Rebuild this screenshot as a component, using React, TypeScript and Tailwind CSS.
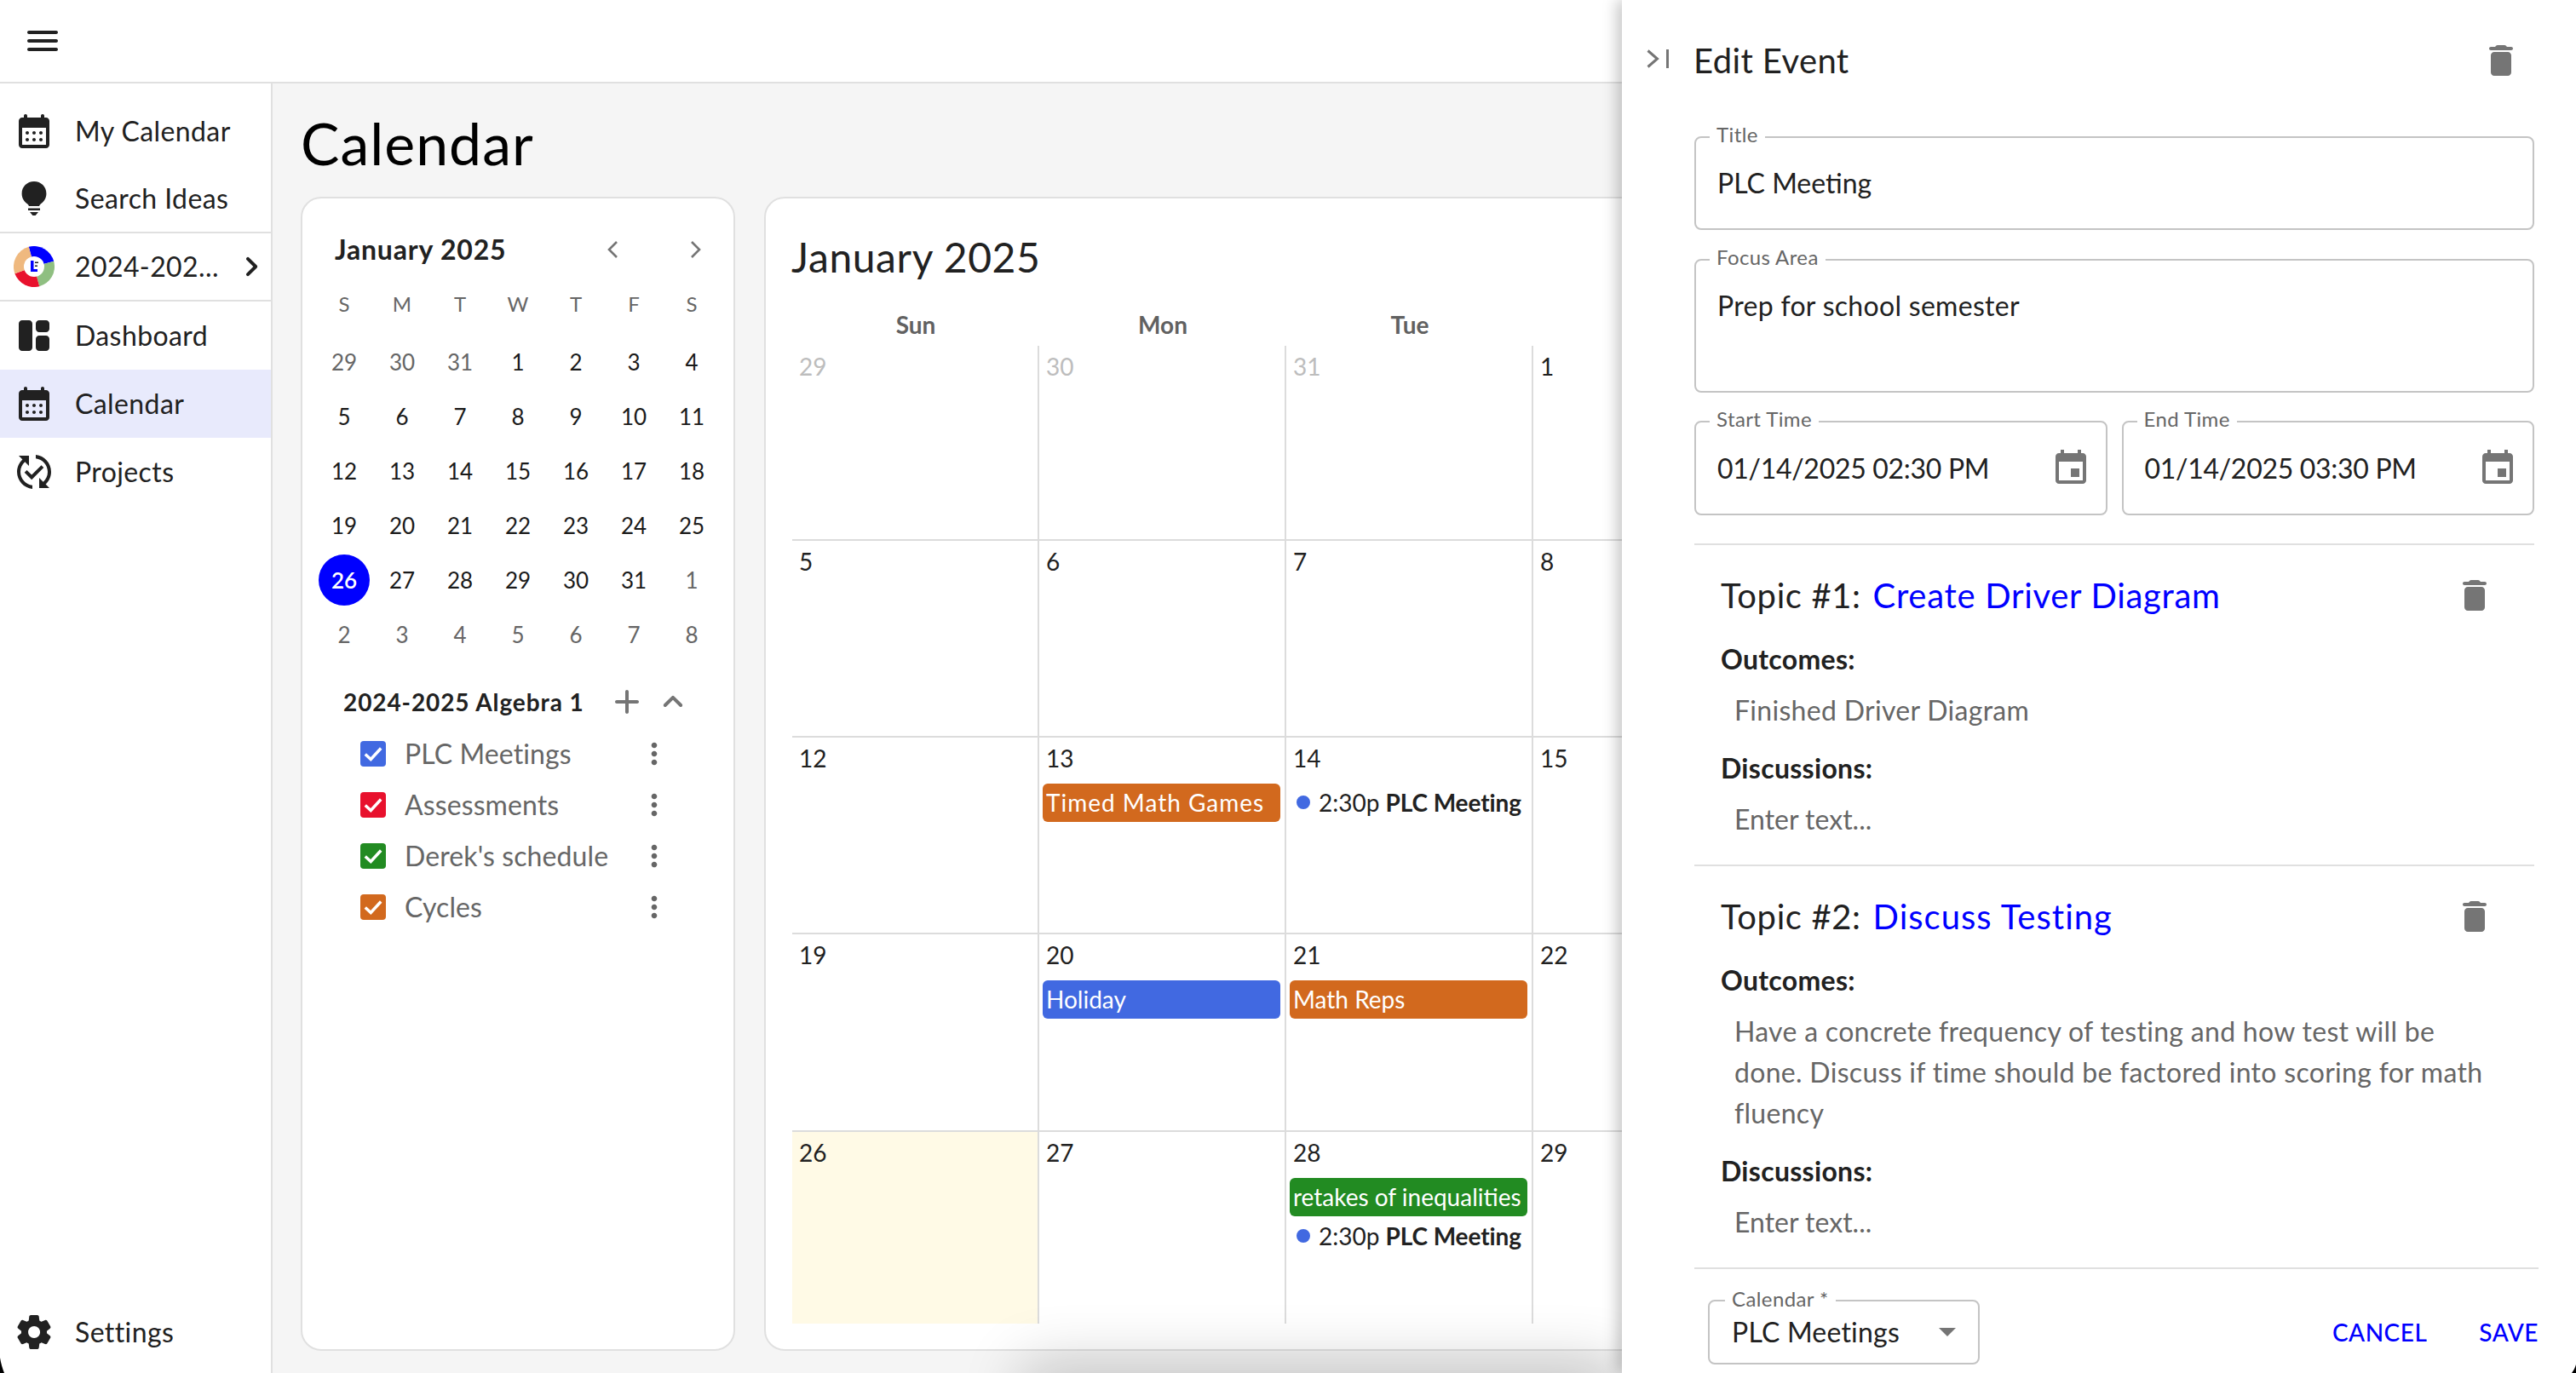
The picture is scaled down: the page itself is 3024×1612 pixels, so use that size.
import type { ReactNode } from "react";

const paths = {
  menu: "M4 18h16c.55 0 1-.45 1-1s-.45-1-1-1H4c-.55 0-1 .45-1 1s.45 1 1 1zm0-5h16c.55 0 1-.45 1-1s-.45-1-1-1H4c-.55 0-1 .45-1 1s.45 1 1 1zM3 7c0 .55.45 1 1 1h16c.55 0 1-.45 1-1s-.45-1-1-1H4c-.55 0-1 .45-1 1z",
  calendar: "M17 2c-.55 0-1 .45-1 1v1H8V3c0-.55-.45-1-1-1s-1 .45-1 1v1H5c-1.11 0-1.99.9-1.99 2L3 20c0 1.1.89 2 2 2h14c1.1 0 2-.9 2-2V6c0-1.1-.9-2-2-2h-1V3c0-.55-.45-1-1-1zm2 18H5V10h14v10zm-8-7c0-.55.45-1 1-1s1 .45 1 1-.45 1-1 1-1-.45-1-1zm-4 0c0-.55.45-1 1-1s1 .45 1 1-.45 1-1 1-1-.45-1-1zm8 0c0-.55.45-1 1-1s1 .45 1 1-.45 1-1 1-1-.45-1-1zm-4 4c0-.55.45-1 1-1s1 .45 1 1-.45 1-1 1-1-.45-1-1zm-4 0c0-.55.45-1 1-1s1 .45 1 1-.45 1-1 1-1-.45-1-1zm8 0c0-.55.45-1 1-1s1 .45 1 1-.45 1-1 1-1-.45-1-1z",
  bulb: "M12 2C7.9 2 4.8 5.1 4.8 9.1c0 2.6 1.3 4.7 3.2 6 .5.4.8.9 1 1.4h6c.2-.5.5-1 1-1.4 1.9-1.3 3.2-3.4 3.2-6C19.2 5.1 16.1 2 12 2zM8.5 17.8h7V19h-7zM9.5 20h5l-1.7 2h-1.6z",
  dashboard: "M9 21H5c-1.1 0-2-.9-2-2V5c0-1.1.9-2 2-2h4c1.1 0 2 .9 2 2v14c0 1.1-.9 2-2 2zm6 0h4c1.1 0 2-.9 2-2v-5c0-1.1-.9-2-2-2h-4c-1.1 0-2 .9-2 2v5c0 1.1.9 2 2 2zm6-13V5c0-1.1-.9-2-2-2h-4c-1.1 0-2 .9-2 2v3c0 1.1.9 2 2 2h4c1.1 0 2-.9 2-2z",
  projects: "M17.66 9.53l-7.07 7.07-4.24-4.24 1.41-1.41 2.83 2.83 5.66-5.66 1.41 1.41zM4 12c0-2.33 1.02-4.42 2.62-5.88L9 8.5v-6H3l2.2 2.2C3.24 6.52 2 9.11 2 12c0 5.19 3.95 9.45 9 9.95v-2.02c-3.94-.49-7-3.86-7-7.93zm18 0c0-5.19-3.95-9.45-9-9.95v2.02c3.94.49 7 3.86 7 7.93 0 2.33-1.02 4.42-2.62 5.88L15 15.5v6h6l-2.2-2.2c1.96-1.82 3.2-4.41 3.2-7.3z",
  settings: "M19.5 12c0-.23-.01-.45-.03-.68l1.86-1.41c.4-.3.51-.86.26-1.3l-1.87-3.23c-.25-.44-.79-.62-1.25-.42l-2.15.91c-.37-.26-.76-.49-1.17-.68l-.29-2.31c-.06-.5-.49-.88-.99-.88h-3.73c-.51 0-.94.38-1 .88l-.29 2.31c-.41.19-.8.42-1.17.68l-2.15-.91c-.46-.2-1-.02-1.25.42L2.41 8.62c-.25.44-.14.99.26 1.3l1.86 1.41c-.02.22-.03.44-.03.67s.01.45.03.68l-1.86 1.41c-.4.3-.51.86-.26 1.3l1.87 3.23c.25.44.79.62 1.25.42l2.15-.91c.37.26.76.49 1.17.68l.29 2.31c.06.5.49.88.99.88h3.73c.5 0 .93-.38.99-.88l.29-2.31c.41-.19.8-.42 1.17-.68l2.15.91c.46.2 1 .02 1.25-.42l1.87-3.23c.25-.44.14-.99-.26-1.3l-1.86-1.41c.03-.23.04-.45.04-.68zm-7.46 3.5c-1.93 0-3.5-1.57-3.5-3.5s1.57-3.5 3.5-3.5 3.5 1.57 3.5 3.5-1.57 3.5-3.5 3.5z",
  trash: "M6 19c0 1.1.9 2 2 2h8c1.1 0 2-.9 2-2V9c0-1.1-.9-2-2-2H8c-1.1 0-2 .9-2 2v10zM18 4h-2.5l-.71-.71c-.18-.18-.44-.29-.7-.29H9.91c-.26 0-.52.11-.7.29L8.5 4H6c-.55 0-1 .45-1 1s.45 1 1 1h12c.55 0 1-.45 1-1s-.45-1-1-1z",
  event: "M17 12h-5v5h5v-5zM16 1v2H8V1H6v2H5c-1.11 0-1.99.9-1.99 2L3 19c0 1.1.89 2 2 2h14c1.1 0 2-.9 2-2V5c0-1.1-.9-2-2-2h-1V1h-2zm3 18H5V8h14v11z",
  more: "M12 8c1.1 0 2-.9 2-2s-.9-2-2-2-2 .9-2 2 .9 2 2 2zm0 2c-1.1 0-2 .9-2 2s.9 2 2 2 2-.9 2-2-.9-2-2-2zm0 6c-1.1 0-2 .9-2 2s.9 2 2 2 2-.9 2-2-.9-2-2-2z",
  plus: "M18 13h-5v5c0 .55-.45 1-1 1s-1-.45-1-1v-5H6c-.55 0-1-.45-1-1s.45-1 1-1h5V6c0-.55.45-1 1-1s1 .45 1 1v5h5c.55 0 1 .45 1 1s-.45 1-1 1z",
  chevronUp: "M11.29 8.71 6.7 13.3c-.39.39-.39 1.02 0 1.41.39.39 1.02.39 1.41 0L12 10.83l3.88 3.88c.39.39 1.02.39 1.41 0 .39-.39.39-1.02 0-1.41L12.7 8.71c-.38-.39-1.02-.39-1.41 0z",
  chevronRight: "M9.29 6.71c-.39.39-.39 1.02 0 1.41L13.17 12l-3.88 3.88c-.39.39-.39 1.02 0 1.41.39.39 1.02.39 1.41 0l4.59-4.59c.39-.39.39-1.02 0-1.41L10.7 6.7c-.38-.38-1.02-.38-1.41.01z",
};

function Icon({ d, className }: { d: string; className: string }) {
  return (
    <svg viewBox="0 0 24 24" fill="currentColor" className={className}>
      <path d={d} />
    </svg>
  );
}

function Logo() {
  return (
    <svg viewBox="0 0 48 48" className="h-[48px] w-[48px] shrink-0">
      <path d="M24 24 17.8.8A24 24 0 0 1 47.2 17.8Z" fill="#0000ff" />
      <path d="M24 24 47.2 17.8A24 24 0 0 1 30.2 47.2Z" fill="#8fbf81" />
      <path d="M24 24 30.2 47.2A24 24 0 0 1 1.4 32.2Z" fill="#e8112d" />
      <path d="M24 24 1.4 32.2A24 24 0 0 1 17.8.8Z" fill="#efb97f" />
      <circle cx="24" cy="24" r="12" fill="#fff" />
      <rect x="20" y="17" width="3.5" height="13" fill="#0000ff" />
      <rect x="20" y="27" width="8" height="3" fill="#0000ff" />
      <rect x="25" y="18.5" width="4" height="1.5" fill="#222" />
      <rect x="25" y="22.5" width="3" height="1.5" fill="#222" />
    </svg>
  );
}

function NavItem({ icon, label, active, height = "h-[80px]" }: { icon: ReactNode; label: string; active?: boolean; height?: string }) {
  return (
    <div className={`flex items-center pl-[16px] ${height} ${active ? "bg-[#e8eafc]" : ""}`}>
      <span className="flex w-[48px] shrink-0 justify-center text-[#212121]">{icon}</span>
      <span className="ml-[24px] text-[32px] tracking-[0.4px] text-[#212121]">{label}</span>
    </div>
  );
}

function Sidebar() {
  return (
    <aside className="flex w-[320px] shrink-0 flex-col border-r-2 border-[#e0e0e0] bg-white pt-[16px]">
      <NavItem height="h-[79px]" icon={<Icon d={paths.calendar} className="h-[48px] w-[48px]" />} label="My Calendar" />
      <NavItem height="h-[79px]" icon={<Icon d={paths.bulb} className="h-[48px] w-[48px]" />} label="Search Ideas" />
      <div className="flex h-[82px] items-center border-y-2 border-[#e0e0e0] pl-[16px]">
        <Logo />
        <span className="ml-[24px] whitespace-nowrap text-[32px] tracking-[0.4px] text-[#212121]">2024-202...</span>
        <Icon d={paths.chevronRight} className="ml-auto mr-[-1px] h-[48px] w-[48px] shrink-0 text-[#212121]" />
      </div>
      <NavItem icon={<Icon d={paths.dashboard} className="h-[48px] w-[48px]" />} label="Dashboard" />
      <NavItem icon={<Icon d={paths.calendar} className="h-[48px] w-[48px]" />} label="Calendar" active />
      <NavItem icon={<Icon d={paths.projects} className="h-[48px] w-[48px]" />} label="Projects" />
      <div className="mt-auto mb-[8px]">
        <NavItem icon={<Icon d={paths.settings} className="h-[48px] w-[48px]" />} label="Settings" />
      </div>
    </aside>
  );
}

const miniWeeks = [
  [29, 30, 31, 1, 2, 3, 4],
  [5, 6, 7, 8, 9, 10, 11],
  [12, 13, 14, 15, 16, 17, 18],
  [19, 20, 21, 22, 23, 24, 25],
  [26, 27, 28, 29, 30, 31, 1],
  [2, 3, 4, 5, 6, 7, 8],
];

const calendars = [
  { name: "PLC Meetings", color: "bg-[#4169e1]" },
  { name: "Assessments", color: "bg-[#e8112d]" },
  { name: "Derek's schedule", color: "bg-[#228b22]" },
  { name: "Cycles", color: "bg-[#d2691e]" },
];

function MiniCalendar() {
  return (
    <div className="w-[510px] shrink-0 rounded-[24px] border-2 border-[#e0e0e0] bg-white pl-[15px] pt-[28px]">
      <div className="flex h-[64px] items-center pl-[23px]">
        <span className="text-[32px] font-bold tracking-[0.8px] text-[#212121]">January 2025</span>
        <svg viewBox="0 0 16 24" fill="none" stroke="#757575" strokeWidth="2.6" className="ml-auto h-[24px] w-[16px]">
          <path d="M13 3 4 12l9 9" />
        </svg>
        <svg viewBox="0 0 16 24" fill="none" stroke="#757575" strokeWidth="2.6" className="ml-[82px] mr-[36px] h-[24px] w-[16px]">
          <path d="m3 3 9 9-9 9" />
        </svg>
      </div>
      <div className="grid w-[476px] grid-cols-7 text-center text-[26px]">
        {["S", "M", "T", "W", "T", "F", "S"].map((d, i) => (
          <div key={i} className="flex h-[68px] items-center justify-center pb-[4px] text-[24px] text-[#666666]">{d}</div>
        ))}
        {miniWeeks.map((week, w) =>
          week.map((d, i) => {
            const outside = (w === 0 && d > 20) || (w >= 4 && d < 20);
            const today = w === 4 && d === 26;
            return (
              <div key={`${w}-${i}`} className="flex h-[64px] items-center justify-center">
                {today ? (
                  <span className="flex h-[60px] w-[60px] items-center justify-center rounded-full bg-[#0000ff] font-semibold text-white">{d}</span>
                ) : (
                  <span className={outside ? "text-[#666666]" : "text-[#1a1a1a]"}>{d}</span>
                )}
              </div>
            );
          }),
        )}
      </div>
      <div className="mr-[47px] mt-[16px] flex h-[62px] items-center gap-[6px] pl-[33px]">
        <span className="mr-auto whitespace-nowrap text-[28px] font-bold tracking-[0.9px] text-[#212121]">2024-2025 Algebra 1</span>
        <Icon d={paths.plus} className="h-[48px] w-[48px] shrink-0 text-[#757575]" />
        <Icon d={paths.chevronUp} className="h-[48px] w-[48px] shrink-0 text-[#757575]" />
      </div>
      <div className="pl-[53px]">
        {calendars.map((c) => (
          <div key={c.name} className="flex h-[60px] items-center">
            <span className={`flex h-[30px] w-[30px] items-center justify-center rounded-[4px] ${c.color}`}>
              <svg viewBox="0 0 24 24" fill="none" stroke="#fff" strokeWidth="3.2" className="h-[26px] w-[26px]">
                <path d="M3.5 12.5 9.5 18 20.5 6" />
              </svg>
            </span>
            <span className="ml-[22px] w-[273px] whitespace-nowrap text-[32px] tracking-[0.1px] text-[#666666]">{c.name}</span>
            <Icon d={paths.more} className="h-[40px] w-[40px] text-[#666666]" />
          </div>
        ))}
      </div>
    </div>
  );
}

type CalEvent = { kind: "bar"; title: string; color: string } | { kind: "dot"; title: string };

const events: Record<string, CalEvent[]> = {
  "13": [{ kind: "bar", title: "Timed Math Games", color: "bg-[#d2691e] tracking-[1px]" }],
  "14": [{ kind: "dot", title: "PLC Meeting" }],
  "20": [{ kind: "bar", title: "Holiday", color: "bg-[#4169e1]" }],
  "21": [{ kind: "bar", title: "Math Reps", color: "bg-[#d2691e]" }],
  "28": [
    { kind: "bar", title: "retakes of inequalities", color: "bg-[#228b22]" },
    { kind: "dot", title: "PLC Meeting" },
  ],
};

// only the columns that stay visible beside the drawer
const monthWeeks = [
  [29, 30, 31, 1],
  [5, 6, 7, 8],
  [12, 13, 14, 15],
  [19, 20, 21, 22],
  [26, 27, 28, 29],
];

function MonthGrid() {
  return (
    <div className="min-w-0 flex-1 overflow-hidden rounded-[24px] border-2 border-[#e0e0e0] bg-white pl-[31px] pt-[37px]">
      <div className="ml-[-1px] h-[64px] text-[48px] leading-[64px] tracking-[0.6px] text-[#212121]">January 2025</div>
      <div className="mt-[24px] grid w-[1160px] grid-cols-4">
        {["Sun", "Mon", "Tue", ""].map((d) => (
          <div key={d} className="flex h-[48px] items-center justify-center pb-[2px] text-[28px] font-bold text-[#616161]">{d}</div>
        ))}
      </div>
      <div className="grid h-[1148px] w-[1160px] grid-cols-4 grid-rows-[227px_231px_231px_232px_227px]">
        {monthWeeks.map((week, w) =>
          week.map((d, i) => {
            const outside = w === 0 && d > 20;
            const today = w === 4 && d === 26;
            return (
              <div key={`${w}-${i}`} className={`border-r-2 border-[#dcdcdc] ${w > 0 ? "border-t-2" : ""} ${today ? "bg-[#fffae6]" : ""}`}>
                <div className={`pl-[8px] pt-[6px] text-[28px] leading-[36px] ${outside ? "text-[#bdbdbd]" : "text-[#212121]"}`}>{d}</div>
                <div className="mt-[12px] flex flex-col gap-[1px] pl-[4px] pr-[5px]">
                  {!outside &&
                    (events[String(d)] ?? []).map((e) =>
                      e.kind === "bar" ? (
                        <div key={e.title} className={`flex h-[45px] items-center whitespace-nowrap rounded-[6px] pb-[2px] pl-[4px] text-[28px] text-white ${e.color}`}>{e.title}</div>
                      ) : (
                        <div key={e.title} className="flex h-[45px] items-center whitespace-nowrap pb-[2px] text-[28px] text-[#212121]">
                          <span className="ml-[8px] mr-[10px] h-[16px] w-[16px] shrink-0 rounded-full bg-[#4169e1]" />
                          2:30p&nbsp;<b className="font-bold tracking-[-0.1px]">{e.title}</b>
                        </div>
                      ),
                    )}
                </div>
              </div>
            );
          }),
        )}
      </div>
    </div>
  );
}

function Field({ label, height, children, className }: { label: string; height: string; children: ReactNode; className?: string }) {
  return (
    <div className={`relative rounded-[8px] border-2 border-[#c4c4c4] ${height} ${className ?? ""}`}>
      <span className="absolute left-[16px] top-[-20px] bg-white px-[8px] text-[24px] leading-[32px] tracking-[0.4px] text-[#666666]">{label}</span>
      {children}
    </div>
  );
}

function Topic({ n, title, spacing, outcome }: { n: number; title: string; spacing: string; outcome: ReactNode }) {
  return (
    <div className="border-t-2 border-[#e0e0e0] pb-[29px] pl-[31px] pt-[35px]">
      <div className="flex h-[48px] items-center pr-[46px] text-[40px]">
        <span className="tracking-[0.6px] text-[#212121]">Topic #{n}:</span>
        <span className={`ml-[14px] text-[#0000ff] ${spacing}`}>{title}</span>
        <Icon d={paths.trash} className="ml-auto h-[48px] w-[48px] text-[#757575]" />
      </div>
      <div className="mt-[27px] text-[32px] font-bold leading-[48px] tracking-[0.3px] text-[#212121]">Outcomes:</div>
      <div className="mt-[12px] pl-[16px] text-[32px] leading-[48px] tracking-[0.3px] text-[#666666]">{outcome}</div>
      <div className="mt-[20px] text-[32px] font-bold leading-[48px] tracking-[0.3px] text-[#212121]">Discussions:</div>
      <div className="mt-[12px] pl-[16px] text-[32px] leading-[48px] text-[#666666]">Enter text...</div>
    </div>
  );
}

function EditDrawer() {
  return (
    <div className="absolute bottom-0 right-0 top-0 w-[1120px] bg-white shadow-[-6px_0_16px_rgba(0,0,0,0.22)]">
      <div className="mt-[47px] flex h-[48px] items-center pl-[18px] pr-[64px]">
        <span className="flex w-[48px] justify-center pb-[4px]">
          <svg viewBox="0 0 26 22" fill="none" stroke="#757575" strokeWidth="3" className="h-[22px] w-[26px]">
            <path d="m1.5 1.5 11 9.5-11 9.5M24.5 0v22" />
          </svg>
        </span>
        <span className="ml-[18px] text-[40px] tracking-[0.4px] text-[#212121]">Edit Event</span>
        <Icon d={paths.trash} className="ml-auto h-[48px] w-[48px] text-[#757575]" />
      </div>
      <div className="mt-[65px] flex flex-col pl-[85px] pr-[49px]">
        <Field label="Title" height="h-[110px]">
          <div className="flex h-full items-center pl-[25px] text-[32px] text-[#212121]">PLC Meeting</div>
        </Field>
        <Field label="Focus Area" height="h-[157px]" className="mt-[34px]">
          <div className="pl-[25px] pt-[29px] text-[32px] leading-[48px] tracking-[0.3px] text-[#212121]">Prep for school semester</div>
        </Field>
        <div className="mt-[33px] flex gap-[17px]">
          {[
            ["Start Time", "01/14/2025 02:30 PM"],
            ["End Time", "01/14/2025 03:30 PM"],
          ].map(([label, value]) => (
            <Field key={label} label={label} height="h-[111px]" className="flex-1">
              <div className="flex h-full items-center pl-[25px] pr-[17px] text-[32px] tracking-[-0.3px] text-[#212121]">
                {value}
                <Icon d={paths.event} className="ml-auto h-[48px] w-[48px] text-[#757575]" />
              </div>
            </Field>
          ))}
        </div>
        <div className="mt-[33px]">
          <Topic n={1} title="Create Driver Diagram" spacing="tracking-[0.7px]" outcome="Finished Driver Diagram" />
          <Topic
            n={2}
            title="Discuss Testing"
            spacing="tracking-[1px]"
            outcome={
              <>
                Have a concrete frequency of testing and how test will be
                <br />
                done. Discuss if time should be factored into scoring for math
                <br />
                fluency
              </>
            }
          />
        </div>
        <div className="mr-[-5px] flex border-t-2 border-[#e0e0e0] pl-[16px] pt-[36px]">
          <div className="relative flex h-[76px] w-[319px] items-center rounded-[8px] border-2 border-[#c4c4c4] pl-[26px] text-[32px] tracking-[0.2px] text-[#212121]">
            <span className="absolute left-[18px] top-[-17px] bg-white px-[8px] text-[24px] leading-[28px] tracking-[0.4px] text-[#666666]">Calendar *</span>
            PLC Meetings
            <svg viewBox="0 0 20 10" className="absolute right-[26px] top-[31px] h-[10px] w-[20px]" fill="#757575">
              <path d="M0 0h20L10 10z" />
            </svg>
          </div>
          <div className="ml-auto flex h-[76px] items-center gap-[61px] text-[28px] font-medium tracking-[0.5px] text-[#0000ff]">
            <span>CANCEL</span>
            <span>SAVE</span>
          </div>
        </div>
      </div>
    </div>
  );
}

export default function App() {
  return (
    <div className="relative flex h-[1612px] w-[3024px] flex-col overflow-hidden bg-white font-['Lato',sans-serif]">
      <header className="flex h-[98px] shrink-0 items-center border-b-2 border-[#e0e0e0] pl-[26px]">
        <Icon d={paths.menu} className="h-[48px] w-[48px] text-[#212121]" />
      </header>
      <div className="flex min-h-0 flex-1">
        <Sidebar />
        <main className="flex min-w-0 flex-1 flex-col bg-[#f5f5f5] pb-[26px] pl-[33px] pr-[34px]">
          <h1 className="flex h-[133px] shrink-0 items-center pt-[6px] text-[68px] tracking-[1px] text-black">Calendar</h1>
          <div className="flex min-h-0 flex-1 gap-[34px]">
            <MiniCalendar />
            <MonthGrid />
          </div>
        </main>
      </div>
      <div className="pointer-events-none absolute left-[1240px] top-[1640px] h-[30px] w-[620px] shadow-[0_0_70px_40px_rgba(0,0,0,0.2)]" />
      <EditDrawer />
      <svg viewBox="0 0 6 18" className="absolute bottom-0 left-0 h-[18px] w-[6px]">
        <path d="M0 0C1 6 3 13 5 18H0Z" fill="#000" />
      </svg>
      <svg viewBox="0 0 6 10" className="absolute bottom-0 right-0 h-[10px] w-[6px]">
        <path d="M6 0C5 4 3 7 1 10H6Z" fill="#000" />
      </svg>
    </div>
  );
}
